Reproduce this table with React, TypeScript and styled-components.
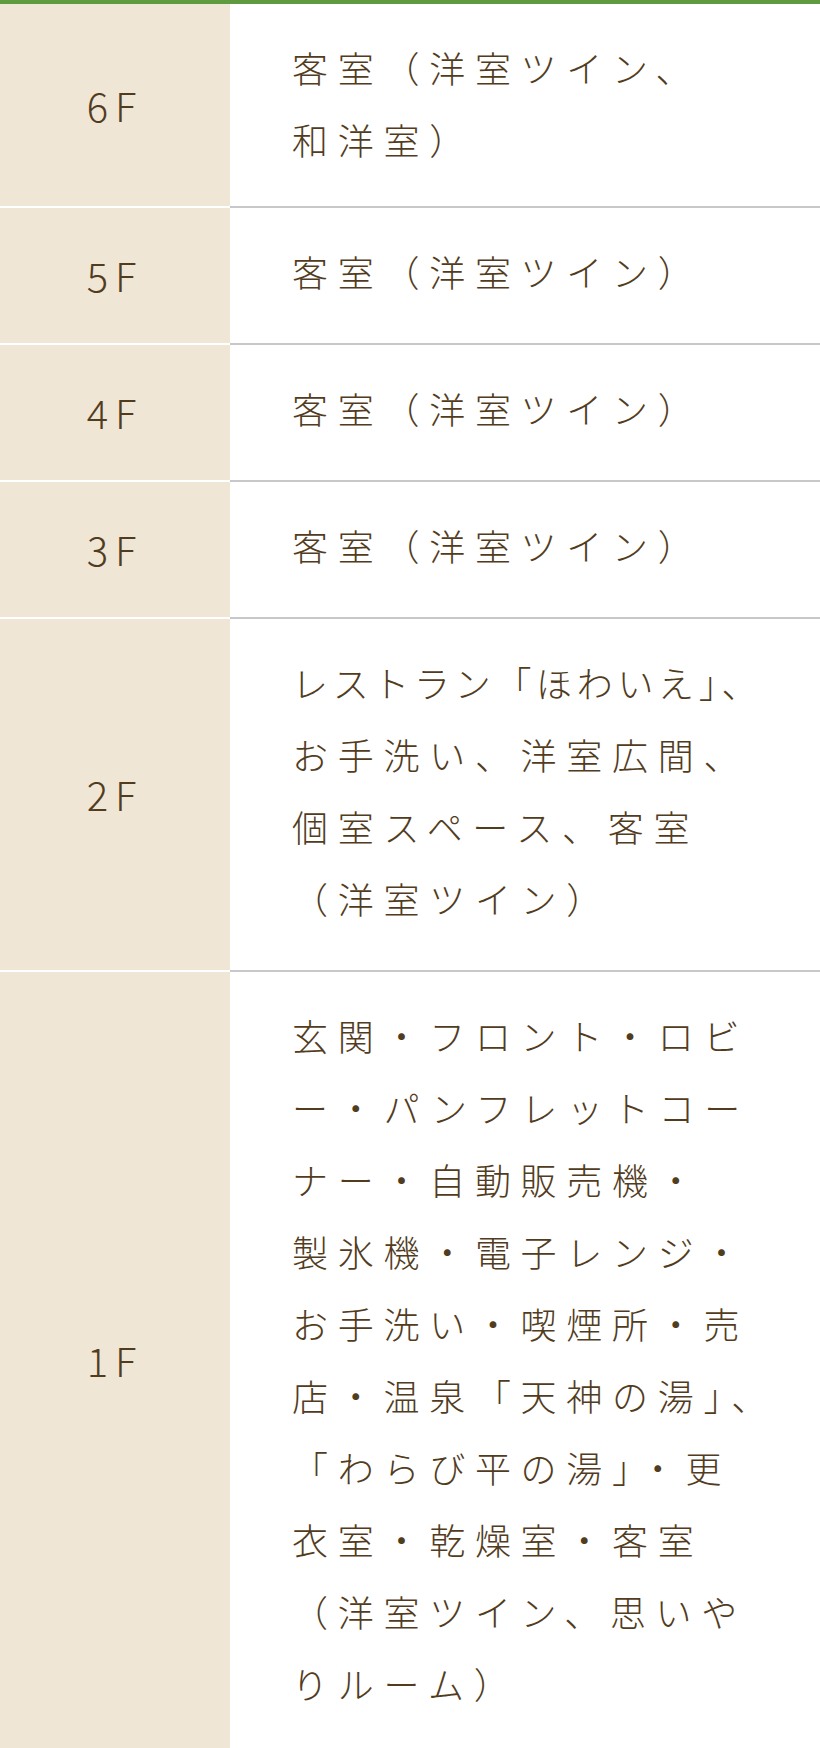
import React from "react";
import styled, { createGlobalStyle } from "styled-components";

const GlobalStyle = createGlobalStyle`
  html, body {
    margin: 0;
    padding: 0;
    background: #fff;
  }
  body {
    font-family: "Noto Sans CJK JP", "Noto Sans", sans-serif;
    color: #523c1e;
  }
`;

type Floor = {
  floor: string;
  lines: string[];
  tightFirst?: boolean;
  padBottom?: number;
};

const floors: Floor[] = [
  { floor: "6F", lines: ["客室（洋室ツイン、", "和洋室）"], padBottom: 31 },
  { floor: "5F", lines: ["客室（洋室ツイン）"] },
  { floor: "4F", lines: ["客室（洋室ツイン）"] },
  { floor: "3F", lines: ["客室（洋室ツイン）"] },
  {
    floor: "2F",
    tightFirst: true,
    padBottom: 36,
    lines: [
      "レストラン「ほわいえ」、",
      "お手洗い、洋室広間、",
      "個室スペース、客室",
      "（洋室ツイン）",
    ],
  },
  {
    floor: "1F",
    lines: [
      "玄関・フロント・ロビ",
      "ー・パンフレットコー",
      "ナー・自動販売機・",
      "製氷機・電子レンジ・",
      "お手洗い・喫煙所・売",
      "店・温泉「天神の湯」、",
      "「わらび平の湯」・更",
      "衣室・乾燥室・客室",
      "（洋室ツイン、思いや",
      "りルーム）",
    ],
  },
];

function FloorGuide() {
  return (
    <Table>
      <tbody>
        {floors.map((f) => (
          <tr key={f.floor}>
            <FloorCell scope="row">{f.floor}</FloorCell>
            <InfoCell $padBottom={f.padBottom ?? 29}>
              {f.lines.map((line, i) => (
                <Line key={i} $tight={!!f.tightFirst && i === 0}>
                  {line}
                </Line>
              ))}
            </InfoCell>
          </tr>
        ))}
      </tbody>
    </Table>
  );
}

export default function App() {
  return (
    <>
      <GlobalStyle />
      <FloorGuide />
    </>
  );
}

const Table = styled.table`
  width: 100%;
  border-spacing: 0;
  border-collapse: separate;
  border-top: 4px solid #5f9a40;
  table-layout: fixed;
`;

const FloorCell = styled.th`
  width: 230px;
  padding: 28px 0;
  background: #f0e6d6;
  border-bottom: 2px solid #fff;
  font-size: 40px;
  font-weight: 300;
  line-height: 79px;
  letter-spacing: 0.17em;
  text-align: center;
  vertical-align: middle;
`;

const InfoCell = styled.td<{ $padBottom: number }>`
  padding: 27px 30px ${(p) => p.$padBottom}px 62px;
  border-bottom: 2px solid #c8c8c8;
  font-size: 36px;
  font-weight: 300;
  line-height: 72px;
  letter-spacing: 0.27em;
  vertical-align: top;
`;

const Line = styled.span<{ $tight?: boolean }>`
  display: block;
  white-space: nowrap;
  letter-spacing: ${(p) => (p.$tight ? "0.13em" : "inherit")};
`;
